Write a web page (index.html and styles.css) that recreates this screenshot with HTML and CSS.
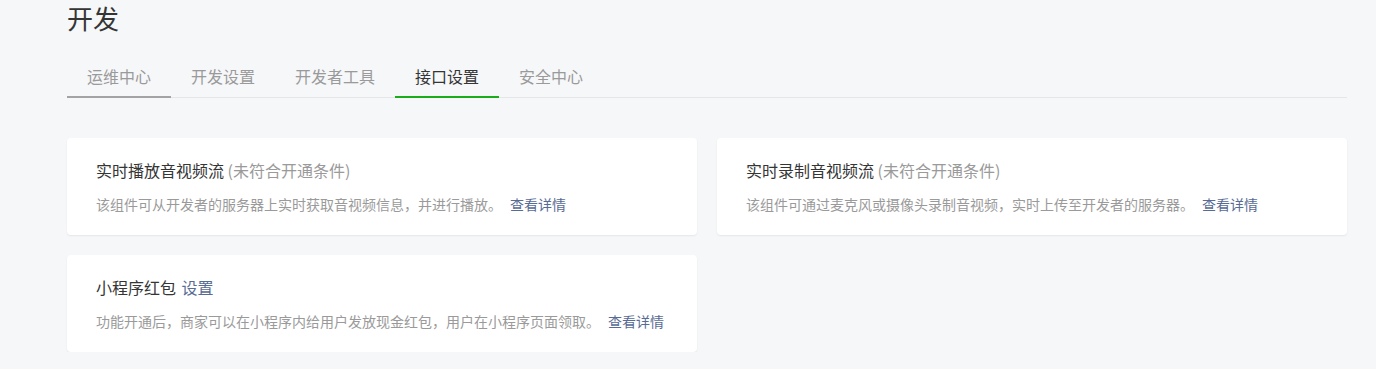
FILE: index.html
```html
<!DOCTYPE html>
<html lang="zh-CN">
<head>
    <meta charset="UTF-8">
    <title>开发</title>
    <link rel="stylesheet" href="styles.css">
</head>
<body>
    <div class="page">
        <!-- Page title -->
        <h2 class="page-title">开发</h2>

        <!-- Tabs -->
        <div class="tabs">
            <a class="tab tab-hover" href="#">运维中心</a>
            <a class="tab" href="#">开发设置</a>
            <a class="tab" href="#">开发者工具</a>
            <a class="tab tab-active" href="#">接口设置</a>
            <a class="tab" href="#">安全中心</a>
        </div>

        <!-- Interface cards -->
        <div class="card-grid">
            <div class="card">
                <div class="card-title">实时播放音视频流 <span class="card-status">(未符合开通条件)</span></div>
                <div class="card-desc">该组件可从开发者的服务器上实时获取音视频信息，并进行播放。<a class="link" href="#">查看详情</a></div>
            </div>
            <div class="card">
                <div class="card-title">实时录制音视频流 <span class="card-status">(未符合开通条件)</span></div>
                <div class="card-desc">该组件可通过麦克风或摄像头录制音视频，实时上传至开发者的服务器。<a class="link" href="#">查看详情</a></div>
            </div>
            <div class="card">
                <div class="card-title">小程序红包 <a class="link link-title" href="#">设置</a></div>
                <div class="card-desc">功能开通后，商家可以在小程序内给用户发放现金红包，用户在小程序页面领取。<a class="link" href="#">查看详情</a></div>
            </div>
        </div>
    </div>
</body>
</html>
```

FILE: styles.css
```css
body {
    margin: 0;
    background-color: #f6f7f9;
    font-family: "Noto Sans CJK SC", "Liberation Sans", sans-serif;
    color: #353535;
}

.page {
    width: 1280px;
    padding-left: 67px;
}

/* Page title */
.page-title {
    margin: 2px 0 0;
    font-size: 26px;
    font-weight: normal;
    line-height: 32px;
    color: #353535;
}

/* Tabs */
.tabs {
    display: flex;
    margin-top: 23px;
    border-bottom: 1px solid #e4e6e9;
}

.tab {
    display: block;
    padding: 0 20px;
    font-size: 16px;
    line-height: 39px;
    color: #9a9a9a;
    text-decoration: none;
    border-bottom: 2px solid transparent;
    margin-bottom: -1px;
}

.tab-hover {
    border-bottom-color: #a3a3a6;
}

.tab-active {
    color: #353535;
    border-bottom-color: #1aad19;
}

/* Cards */
.card-grid {
    display: grid;
    grid-template-columns: 630px 630px;
    gap: 20px;
    margin-top: 40px;
}

.card {
    background-color: #fff;
    border-radius: 4px;
    box-shadow: 0 1px 2px rgba(0, 0, 0, 0.07);
    padding: 22px 29px 21px;
}

.card-title {
    font-size: 16px;
    line-height: 20px;
    color: #353535;
}

.card-status {
    color: #9a9a9a;
}

.card-desc {
    margin-top: 14px;
    font-size: 14px;
    line-height: 20px;
    color: #9a9a9a;
}

.link {
    color: #576b95;
    text-decoration: none;
    margin-left: 8px;
}

.link-title {
    margin-left: 2px;
}
```
